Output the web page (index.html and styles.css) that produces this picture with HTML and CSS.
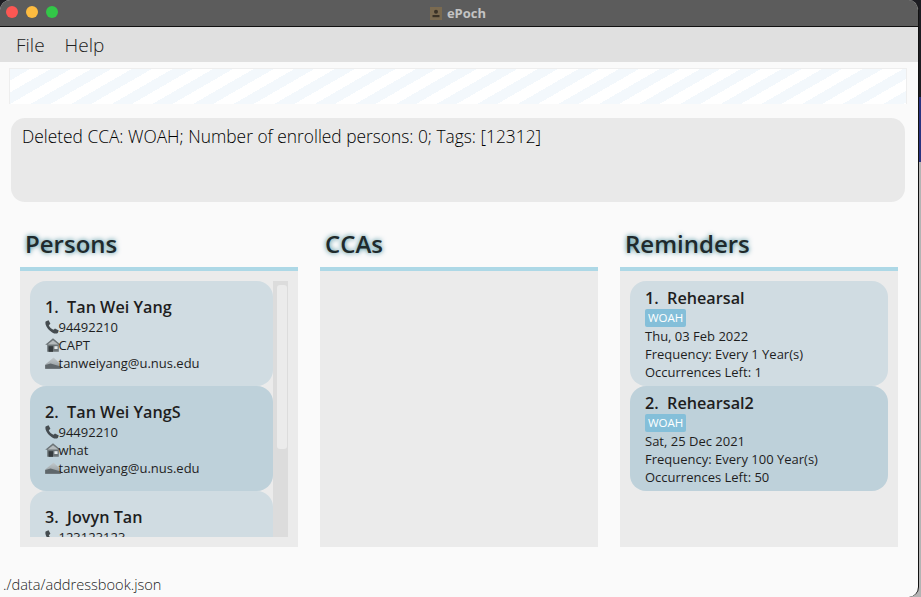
FILE: index.html
```html
<!DOCTYPE html>
<html>
<head>
    <title>ePoch</title>
    <link rel="stylesheet" href="styles.css">
</head>
<body>
    <svg width="0" height="0" class="icon-defs">
        <defs>
            <linearGradient id="mail-top" x1="0" y1="0" x2="0" y2="1">
                <stop offset="0" stop-color="#c3cacd"/>
                <stop offset="1" stop-color="#8d9598"/>
            </linearGradient>
            <symbol id="icon-phone" viewBox="0 0 14 14" preserveAspectRatio="xMinYMid">
                <path d="M.6 1.6 L3.6 .2 L5.4 3.8 L3.8 5.2 C4.6 7.2 6.4 9 8.6 9.8 L10 8.4 L13.8 10.4 L12.8 13 C11.4 14 9.4 13.7 7.2 12.4 C4 10.6 1.6 7.8 .6 4.6 C.3 3.4 .3 2.4 .6 1.6 Z" fill="#454c50"/>
            </symbol>
            <symbol id="icon-home" viewBox="0 0 16 14" preserveAspectRatio="xMinYMid">
                <path d="M8 .3 L15.8 6.8 L13.8 6.8 L13.8 13.8 L2.2 13.8 L2.2 6.8 L.2 6.8 Z" fill="#6c7477"/>
                <path d="M2.6 6.6 L8 2.2 L13.4 6.6 Z" fill="#b4babc"/>
                <rect x="3.6" y="8.2" width="4.4" height="5.6" fill="#353b3e"/>
                <rect x="9.4" y="8.2" width="3.2" height="2.8" fill="#e3e8ea"/>
            </symbol>
            <symbol id="icon-mail" viewBox="0 0 16 12" preserveAspectRatio="xMinYMid">
                <path d="M.2 7.6 L8.6 .4 L15.8 7.6 L15.8 11.8 L.2 11.8 Z" fill="url(#mail-top)"/>
                <path d="M.2 8 L5.6 6.6 L15.8 9.6 L15.8 11.8 L.2 11.8 Z" fill="#5f676b"/>
            </symbol>
        </defs>
    </svg>

    <div class="window">
        <div class="titlebar">
            <div class="lights">
                <span class="light light-red"></span>
                <span class="light light-yellow"></span>
                <span class="light light-green"></span>
            </div>
            <div class="title">
                <svg class="title-icon" width="12" height="13" viewBox="0 0 12 13">
                    <rect width="12" height="13" fill="#7a6a50"/>
                    <circle cx="6" cy="4.8" r="2" fill="#3a3226"/>
                    <rect x="2.5" y="8" width="7" height="2.2" fill="#3a3226"/>
                </svg>
                <span>ePoch</span>
            </div>
        </div>

        <div class="menubar">
            <span class="menu-item">File</span>
            <span class="menu-item">Help</span>
        </div>

        <div class="stripes"></div>

        <div class="result">Deleted CCA: WOAH; Number of enrolled persons: 0; Tags: [12312]</div>

        <div class="panels">
            <section class="panel">
                <h2 class="panel-title">Persons</h2>
                <div class="panel-body">
                    <div class="list">
                        <div class="card card-odd person">
                            <div class="card-name">1.&nbsp; Tan Wei Yang</div>
                            <div class="line"><svg class="ico"><use href="#icon-phone"/></svg>94492210</div>
                            <div class="line"><svg class="ico"><use href="#icon-home"/></svg>CAPT</div>
                            <div class="line"><svg class="ico"><use href="#icon-mail"/></svg>tanweiyang@u.nus.edu</div>
                        </div>
                        <div class="card card-even person">
                            <div class="card-name">2.&nbsp; Tan Wei YangS</div>
                            <div class="line"><svg class="ico"><use href="#icon-phone"/></svg>94492210</div>
                            <div class="line"><svg class="ico"><use href="#icon-home"/></svg>what</div>
                            <div class="line"><svg class="ico"><use href="#icon-mail"/></svg>tanweiyang@u.nus.edu</div>
                        </div>
                        <div class="card card-odd person">
                            <div class="card-name">3.&nbsp; Jovyn Tan</div>
                            <div class="line"><svg class="ico"><use href="#icon-phone"/></svg>123123123</div>
                        </div>
                    </div>
                    <div class="scrollbar"><div class="scroll-thumb"></div></div>
                </div>
            </section>

            <section class="panel">
                <h2 class="panel-title">CCAs</h2>
                <div class="panel-body"></div>
            </section>

            <section class="panel">
                <h2 class="panel-title">Reminders</h2>
                <div class="panel-body">
                    <div class="list">
                        <div class="card card-odd reminder">
                            <div class="card-name">1.&nbsp; Rehearsal</div>
                            <div class="line"><span class="tag">WOAH</span></div>
                            <div class="line">Thu, 03 Feb 2022</div>
                            <div class="line">Frequency: Every 1 Year(s)</div>
                            <div class="line">Occurrences Left: 1</div>
                        </div>
                        <div class="card card-even reminder">
                            <div class="card-name">2.&nbsp; Rehearsal2</div>
                            <div class="line"><span class="tag">WOAH</span></div>
                            <div class="line">Sat, 25 Dec 2021</div>
                            <div class="line">Frequency: Every 100 Year(s)</div>
                            <div class="line">Occurrences Left: 50</div>
                        </div>
                    </div>
                </div>
            </section>
        </div>

        <div class="statusbar">./data/addressbook.json</div>
    </div>
</body>
</html>
```

FILE: styles.css
```css
* {
    box-sizing: border-box;
    font-family: "Open Sans", "Noto Sans", sans-serif;
}
html, body {
    height: 100%;
}
body {
    margin: 0;
    background-color: #b4b4b4;
    background-image: linear-gradient(to bottom, #1d1d22 0, #1d1d22 97px, #2a3480 97px, #2a3480 162px, #b4b4b4 162px);
    overflow: hidden;
}
.icon-defs {
    display: block;
    height: 0;
}
.window {
    width: 919px;
    height: 597px;
    background-color: #fafafa;
    border-right: 1px solid #111;
    border-radius: 10px 10px 10px 0;
    overflow: hidden;
    display: flex;
    flex-direction: column;
}
.titlebar {
    height: 27px;
    flex: none;
    background-color: #5c5c5c;
    border-bottom: 1px solid #111;
    display: flex;
    align-items: center;
    justify-content: center;
    position: relative;
}
.lights {
    position: absolute;
    left: 6px;
    top: 6px;
    display: flex;
    gap: 8px;
}
.light {
    width: 12px;
    height: 12px;
    border-radius: 50%;
}
.light-red { background-color: #fc5753; }
.light-yellow { background-color: #fdbc40; }
.light-green { background-color: #33c748; }
.title {
    display: flex;
    align-items: center;
    gap: 5px;
    color: #c4c4c4;
    font-family: "Liberation Sans", sans-serif;
    font-size: 13px;
    font-weight: bold;
    margin-right: 2px;
}
.menubar {
    height: 35px;
    flex: none;
    background-color: #e0e0e0;
    display: flex;
    align-items: center;
    gap: 20px;
    padding-left: 16px;
}
.menu-item {
    font-size: 19px;
    font-weight: 300;
    color: #222;
}
.stripes {
    height: 36px;
    flex: none;
    width: 898px;
    margin: 6px 0 0 9px;
    border: 1px solid #eeeeee;
    border-bottom: none;
    background-color: #fff;
    background-image: repeating-linear-gradient(150deg, #f3f8fc 0, #f3f8fc 10px, #fff 10px, #fff 20.3px);
}
.result {
    height: 84px;
    width: 894px;
    flex: none;
    margin: 14px 0 0 11px;
    padding: 6px 11px;
    background-color: #e9e9e9;
    border-radius: 14px;
    font-size: 17.35px;
    font-weight: 300;
    line-height: 24px;
    color: #000;
}
.panels {
    display: flex;
    gap: 22px;
    padding-left: 20px;
    margin-top: 20px;
    height: 325px;
    flex: none;
}
.panel {
    width: 278px;
    display: flex;
    flex-direction: column;
}
.panel-title {
    margin: 0;
    height: 49px;
    flex: none;
    padding: 6px 0 0 5px;
    font-size: 24px;
    line-height: 32px;
    font-weight: 600;
    color: #1f2a2c;
    text-shadow: 0 0 5px #2f7f90;
    border-bottom: 4px solid #add8e6;
}
.panel-body {
    flex: 1;
    min-height: 0;
    background-color: #ebebeb;
    padding: 10px;
    display: flex;
    overflow: hidden;
}
.list {
    flex: 1;
    overflow: hidden;
}
.card {
    height: 105px;
    border-radius: 16px;
    color: #1b1b1b;
}
.card-odd { background-color: #d0dce2; }
.card-even { background-color: #bed1da; }
.person {
    padding: 15px 15px 0;
}
.reminder {
    padding: 6px 15px 0;
}
.card-name {
    font-size: 16.2px;
    line-height: 22px;
    font-weight: 600;
    color: #1e1e1e;
}
.line {
    font-size: 13px;
    line-height: 18px;
    display: flex;
    align-items: center;
    color: #1e1e1e;
}
.ico {
    width: 16px;
    height: 14px;
    margin-right: -2.5px;
    flex: none;
}
.tag {
    background-color: #84bfd9;
    color: #fff;
    font-size: 11.5px;
    line-height: 18px;
    height: 18px;
    padding: 0 3px;
    border-radius: 2px;
}
.scrollbar {
    width: 15px;
    flex: none;
    background-color: #dcdcdc;
    padding: 4px 1px 0 4px;
}
.scroll-thumb {
    height: 164px;
    background-color: #ebebeb;
    border-radius: 3px;
}
.statusbar {
    padding: 27px 0 0 3px;
    font-size: 14.6px;
    line-height: 20px;
    font-weight: 300;
    color: #222;
}
```
